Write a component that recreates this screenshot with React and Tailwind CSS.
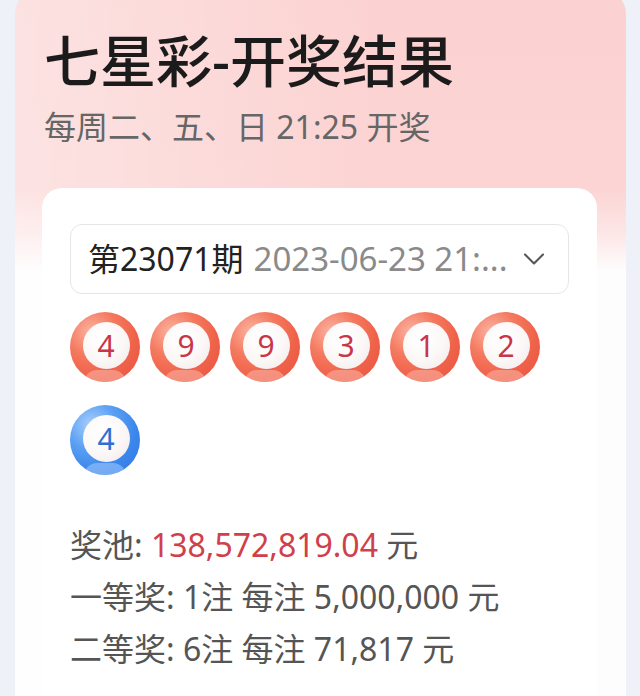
import React from "react";
import { ChevronDown } from "lucide-react";

function Ball({ n, blue }) {
  const ring = blue
    ? "bg-[radial-gradient(circle_at_30%_28%,#a9cffa_0%,#5aa0f3_35%,#3b86ec_65%,#2f78e0_100%)]"
    : "bg-[radial-gradient(circle_at_30%_28%,#fbb3a2_0%,#f4795f_35%,#ef6149_65%,#e6553f_100%)]";
  const num = blue ? "text-[#2f6fd2]" : "text-[#c9364a]";
  return (
    <div className={`relative w-[70px] h-[70px] rounded-full ${ring} flex items-center justify-center overflow-hidden`}>
      <div className={`absolute left-[14px] right-[14px] bottom-[-14px] h-[26px] rounded-full ${blue ? "bg-[#9cc6f8]/60" : "bg-[#f9b3a4]/60"}`} />
      <div className="relative w-[47px] h-[47px] rounded-full bg-[radial-gradient(circle_at_40%_35%,#ffffff_0%,#fbf7f7_55%,#efe7e8_100%)] flex items-center justify-center -mt-[3px] ml-[2px]">
        <span className={`${num} text-[30px] leading-none font-normal`}>{n}</span>
      </div>
    </div>
  );
}

export default function App() {
  const font = "font-['Noto_Sans','Noto_Sans_CJK_SC',sans-serif]";
  return (
    <div className={`w-full h-[696px] overflow-hidden bg-[#eef2f8] ${font}`}>
      <div className="ml-[15px] w-[611px] -mt-[10px] pt-[38px] h-[760px] rounded-[24px] bg-[linear-gradient(90deg,rgba(255,255,255,0.35)_0%,rgba(255,255,255,0)_60%),linear-gradient(180deg,#fbd2d1_0%,#fbd4d3_26%,#fde6e6_32%,#fdfdfe_37%,#fdfdfe_100%)]">
        <div className="pl-[29px]">
          <h1 className="text-[56px] leading-[64px] font-medium text-[#1b1b1b]">七星彩-开奖结果</h1>
          <p className="mt-[15px] text-[32px] leading-[40px] text-[#666666]">每周二、五、日 21:25 开奖</p>
        </div>
        <div className="ml-[27px] mt-[41px] w-[555px] h-[600px] rounded-[20px] bg-white pt-[36px] px-[28px]">
          <div className="h-[70px] w-full rounded-[12px] border border-[#e6e6e6] flex items-center pl-[17px] pr-[16px]">
            <span className="text-[32px] text-[#222222] whitespace-nowrap">第23071期</span>
            <span className="ml-[10px] text-[33px] text-[#8a8a8a] whitespace-nowrap">2023-06-23 21:...</span>
            <ChevronDown className="ml-auto text-[#555555]" size={36} strokeWidth={1.4} />
          </div>
          <div className="mt-[18px] flex flex-wrap gap-x-[10px] gap-y-[23px]">
            {[4, 9, 9, 3, 1, 2].map((n, i) => (
              <Ball key={i} n={n} />
            ))}
            <Ball n={4} blue />
          </div>
          <div className="mt-[44px] text-[32px] leading-[52px] text-[#555555]">
            <div>
              奖池: <span className="text-[#d0404b]">138,572,819.04</span> 元
            </div>
            <div>一等奖: 1注 每注 5,000,000 元</div>
            <div>二等奖: 6注 每注 71,817 元</div>
          </div>
        </div>
      </div>
    </div>
  );
}
